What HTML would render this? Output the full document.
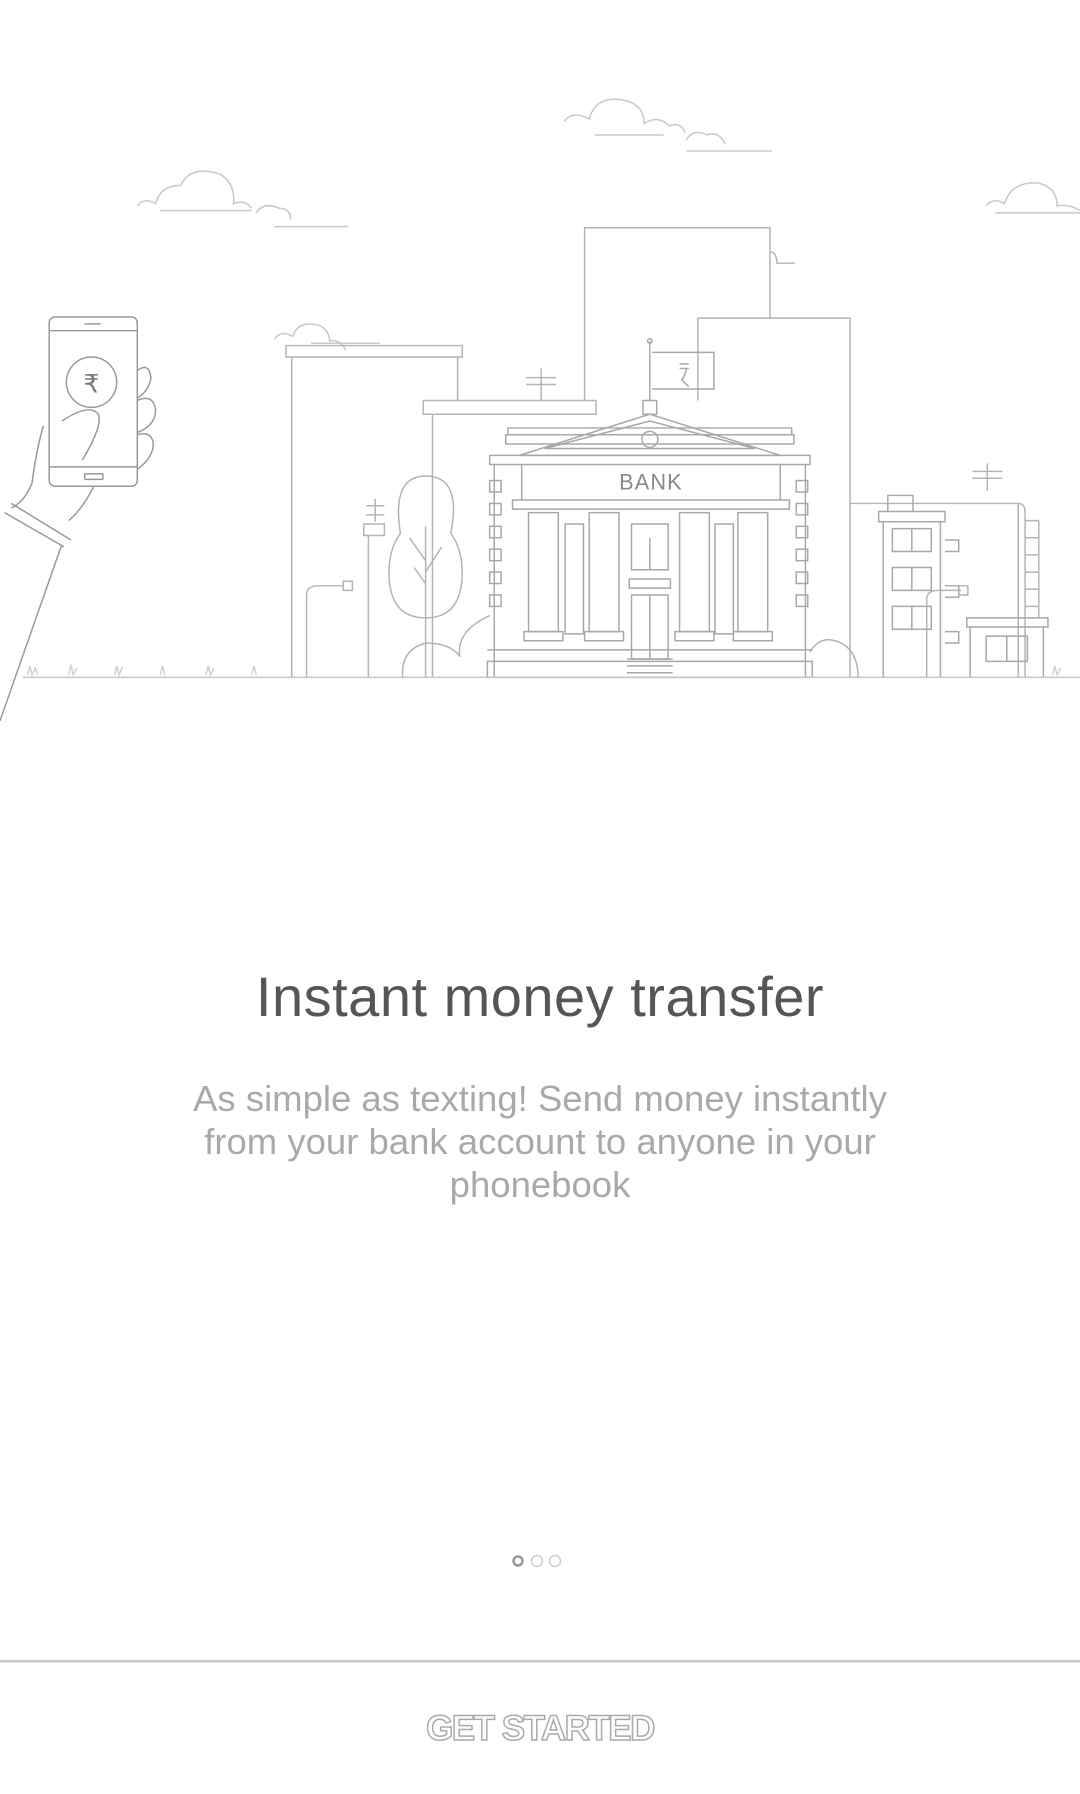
<!DOCTYPE html>
<html><head><meta charset="utf-8"><style>
html,body{margin:0;padding:0;background:#fff;width:1080px;height:1794px;overflow:hidden;font-family:"Liberation Sans",Roboto,sans-serif;position:relative}
svg{position:absolute;left:0;top:0}
.t{position:absolute;left:0;width:1080px;text-align:center}
</style></head><body>
<svg width="1080" height="1794" viewBox="0 0 944 1568" fill="none" stroke="#b4b4b4" stroke-width="1.3">
<g stroke="#c8c8c8">
<path d="M493 106 q8-10 22-2 q6-22 32-16 q16 4 16 20 q12-8 22 2 q10-4 14 6 M600 122 q6-10 18-4 q10-4 16 8 M520 118 h60 M600 132 h75"/>
<path d="M120 180 q6-8 16-2 q4-16 22-16 q8-18 34-10 q14 8 12 26 q10-4 16 4 M224 186 q6-10 20-4 q10 0 10 10 M140 184 h80 M240 198 h64"/>
<path d="M862 180 q6-8 16-2 q6-20 30-18 q16 4 16 20 q10-2 20 4 M870 186 h74"/>
<path d="M240 296 q6-8 16-2 q4-14 22-10 q10 4 10 14 q10-2 14 8 M272 300 h60"/>
</g>
<path d="M511 350 V199 H673 V278 M673 220 q6 0 6 10 h16"/>
<path d="M610 350 V278 H743 V592"/>
<path d="M250 302 H404 V312 H250 Z M255 312 V592 M400 312 V350"/>
<path d="M370 350 H521 V362 H370 Z M378 362 V592"/>
<path d="M460 330 h26 M460 336 h26 M473 322 v28 M850 412 h26 M850 418 h26 M863 405 v24 M320 442 h16 M320 450 h16 M328 436 v20"/>
<path d="M318 458 H336 V468 H318 Z M322 468 V592"/>
<path d="M743 440 H890 V592 M890 440 q6 0 6 8 V592 M896 455 h12 M896 470 h12 M896 485 h12 M896 500 h12 M896 515 h12 M896 530 h12 M896 455 V540 M908 455 V540"/>
<path d="M268 592 V520 q0-8 10-8 h22 M300 508 h8 v8 h-8 z M810 524 q0-8 10-8 h20 M838 512 h8 v8 h-8z M810 524 V592"/>
<path d="M372 540 q-32 0-32-40 q0-20 10-34 q-8-50 22-50 q32 0 22 50 q10 14 10 34 q0 40-32 40 z M372 460 V592 M372 490 l-14-20 M372 500 l14-22 M372 510 l-10-14"/>
<path d="M352 592 q-2-24 20-30 q22 0 30 12 q-4-22 26-36 M708 570 q8-14 22-10 q20 6 20 32"/>
<g stroke="#a8a8a8">
<path d="M568 350 V298 M568 298 m-2 0 a2 2 0 1 0 4 0 a2 2 0 1 0 -4 0 M570 308 H624 V340 H570"/>
<path d="M594 318 h8 m-8 4 h8 m-4 0 q4 0-2 10 l6 6"/>
<path d="M562 350 h12 v12 h-12 z M568 362 L454 398 H682 Z M476 392 L568 368 L660 392 Z"/>
<circle cx="568" cy="384" r="7"/>
<path d="M444 374 H692 V380 H444 Z M442 380 H694 V388 H442 Z M428 398 H708 V406 H428 Z M456 406 H682 V437 H456 Z M448 437 H690 V445 H448 Z"/>
<path d="M432 406 V592 M704 406 V592"/>
<g>
<rect x="428" y="420" width="10" height="10"/><rect x="428" y="440" width="10" height="10"/><rect x="428" y="460" width="10" height="10"/><rect x="428" y="480" width="10" height="10"/><rect x="428" y="500" width="10" height="10"/><rect x="428" y="520" width="10" height="10"/>
<rect x="696" y="420" width="10" height="10"/><rect x="696" y="440" width="10" height="10"/><rect x="696" y="460" width="10" height="10"/><rect x="696" y="480" width="10" height="10"/><rect x="696" y="500" width="10" height="10"/><rect x="696" y="520" width="10" height="10"/>
</g>
<path d="M462 448 H488 V552 H462 Z M515 448 H541 V552 H515 Z M594 448 H620 V552 H594 Z M645 448 H671 V552 H645 Z"/>
<path d="M458 552 h34 v8 h-34z M511 552 h34 v8 h-34z M590 552 h34 v8 h-34z M641 552 h34 v8 h-34z"/>
<path d="M494 458 h16 v96 h-16 z M625 458 h16 v96 h-16 z M552 458 h32 v40 h-32 z M568 470 v28 M550 506 h36 v8 h-36z M552 520 h32 v56 h-32z M568 520 v56"/>
<path d="M426 568 H710 M426 578 H710 V592 H426 Z M548 576 h40 M548 582 h40 M548 588 h40"/>
<text x="569" y="428" font-family="Liberation Sans,sans-serif" font-size="19" fill="#888" stroke="none" text-anchor="middle" letter-spacing="1">BANK</text>
</g>
<g stroke="#a8a8a8">
<path d="M776 433 h22 v14 h-22z M768 447 H826 V456 H768 Z M772 456 V592 M822 456 V592"/>
<path d="M780 462 h34 v20 h-34z M797 462 v20 M780 496 h34 v20 h-34z M797 496 v20 M780 530 h34 v20 h-34z M797 530 v20"/>
<path d="M826 472 h12 v10 h-12 M826 512 h12 v10 h-12 M826 552 h12 v10 h-12"/>
<path d="M845 540 H916 V548 H845 Z M848 548 V592 M912 548 V592 M862 556 h36 v22 h-36z M880 556 v22"/>
</g>
<path d="M20 592 H944" stroke="#c8c8c8"/>
<path d="M24 590 l2-8 l2 8 l3-6 l2 6 M60 590 l2-9 l2 9 l3-6 M100 590 l2-8 l2 8 l3-7 M140 590 l2-8 l2 8 M180 590 l2-8 l2 8 l3-6 M220 590 l2-8 l2 8 M920 590 l2-8 l2 8 l3-6" stroke="#d0d0d0"/>
<g stroke="#999">
<rect x="43" y="277" width="77" height="148" rx="5"/>
<path d="M43 289 h77 M43 408 h77 M74 283 h14"/>
<rect x="74" y="414" width="16" height="5" rx="1"/>
<circle cx="80" cy="334" r="22"/>
<text x="80" y="343" font-family="DejaVu Sans,sans-serif" font-size="22" fill="#777" stroke="none" text-anchor="middle">₹</text>
<path d="M120 324 q10-8 12 6 q-2 12-12 18 M120 350 q14-6 16 8 q0 14-16 20 M120 380 q14-4 14 10 q-2 12-14 20"/>
<path d="M38 372 q-6 20-10 50 q-6 16-18 22 M54 368 q24-16 32-6 q4 10-14 40 M82 425 q-10 20-22 30 M4 448 l52 30 M10 440 l52 32 M54 476 L0 630"/>
</g>
</svg>
<div class="t" style="top:964px;font-size:56px;color:#555;letter-spacing:0.5px">Instant money transfer</div>
<div class="t" style="top:1077px;font-size:36.5px;line-height:43px;color:#a9a9a9;width:760px;left:160px">As simple as texting! Send money instantly from your bank account to anyone in your phonebook</div>
<svg width="1080" height="1794" viewBox="0 0 1080 1794">
<circle cx="518" cy="1561" r="4.5" fill="none" stroke="#999" stroke-width="2.5"/>
<circle cx="537" cy="1561" r="5.5" fill="none" stroke="#ccc" stroke-width="1.5"/>
<circle cx="555" cy="1561" r="5.5" fill="none" stroke="#ccc" stroke-width="1.5"/>
<rect x="0" y="1660" width="1080" height="2.5" fill="#c8c8c8"/>
</svg>
<div class="t" style="top:1709px;font-size:35px;font-weight:bold;color:#fff;-webkit-text-stroke:1.5px #aaa;letter-spacing:-1.5px">GET STARTED</div>
</body></html>
